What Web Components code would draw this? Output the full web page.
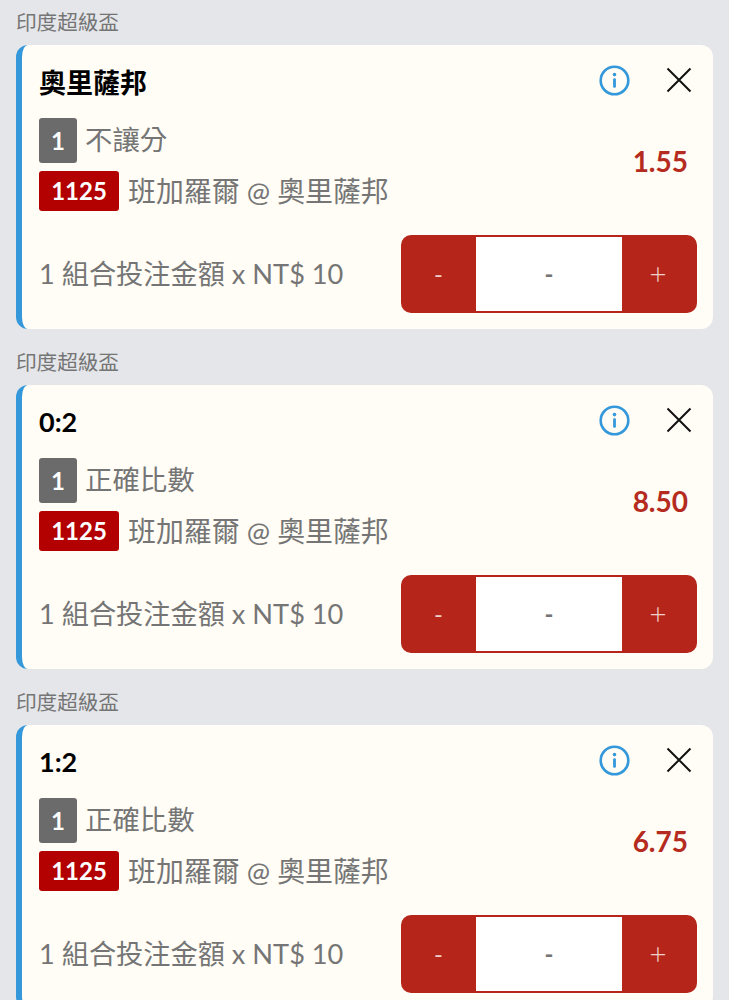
<!DOCTYPE html>
<html lang="zh-Hant">
<head>
<meta charset="utf-8">
<title>投注單</title>
<style>
  html, body {
    margin: 0;
    background: #e4e6e9;
    font-family: Lato, "Noto Sans CJK TC", sans-serif;
  }
  body {
    display: flex;
    flex-direction: column;
    gap: 11px;
    padding: 0 16px;
  }
</style>
</head>
<body>
<bet-card league="印度超級盃" pick="奧里薩邦" market="不讓分" odds="1.55"></bet-card>
<bet-card league="印度超級盃" pick="0:2" market="正確比數" odds="8.50"></bet-card>
<bet-card league="印度超級盃" pick="1:2" market="正確比數" odds="6.75"></bet-card>

<script>
class BetStepper extends HTMLElement {
  constructor() {
    super();
    this.attachShadow({ mode: 'open' });
  }

  connectedCallback() {
    this.shadowRoot.innerHTML = `
      <style>
        :host {
          display: grid;
          grid-template-columns: 75px 146px 75px;
          width: 296px;
          height: 78px;
          box-sizing: border-box;
          padding: 2px 0;
          border-radius: 10px;
          background: #b52519;
          font-size: 24px;
          overflow: hidden;
        }
        div {
          display: flex;
          align-items: center;
          justify-content: center;
          padding-bottom: 2px;
          color: #f0cfcb;
        }
        .value {
          background: #fff;
          color: #757575;
          font-weight: 700;
        }
        .plus {
          font-size: 30px;
          font-weight: 300;
          padding-right: 3px;
        }
      </style>
      <div>-</div>
      <div class="value">-</div>
      <div class="plus">+</div>
    `;
  }
}

class BetCard extends HTMLElement {
  constructor() {
    super();
    this.attachShadow({ mode: 'open' });
  }

  connectedCallback() {
    const league = this.getAttribute('league');
    const pick = this.getAttribute('pick');
    const market = this.getAttribute('market');
    const odds = this.getAttribute('odds');
    this.shadowRoot.innerHTML = `
      <style>
        :host {
          display: block;
          color: #757575;
        }
        .league {
          height: 45px;
          box-sizing: border-box;
          padding-top: 7px;
          font-size: 20.6px;
          line-height: 30px;
        }
        .card {
          display: flex;
          flex-direction: column;
          height: 284px;
          box-sizing: border-box;
          padding: 16px 16px 16px 17px;
          border-left: 6px solid #3498db;
          border-radius: 12px;
          background: #fffdf5;
        }
        .head {
          display: flex;
          align-items: center;
          height: 38px;
        }
        .pick {
          flex: 1;
          padding-top: 2px;
          font-size: 27px;
          font-weight: 700;
          color: #000;
        }
        .info { margin-right: 36px; }
        .close { margin-right: 5px; }
        svg { display: block; }
        .mid {
          display: flex;
          align-items: center;
          justify-content: space-between;
          margin-top: 19px;
        }
        .lines {
          display: flex;
          flex-direction: column;
          gap: 8px;
        }
        .line {
          display: flex;
          align-items: center;
          gap: 9px;
          font-size: 27.9px;
          line-height: 40px;
        }
        .line.market {
          gap: 8px;
          font-size: 27.4px;
        }
        .line.market .text { padding-bottom: 2px; }
        .no, .code {
          display: flex;
          align-items: center;
          justify-content: center;
          border-radius: 3px;
          color: #fff;
          font-weight: 700;
          font-size: 24px;
        }
        .no {
          width: 38px;
          height: 45px;
          background: #6b6b6b;
        }
        .code {
          width: 80px;
          height: 40px;
          background: #b30000;
        }
        .odds {
          margin: 0 9px 8px 0;
          font-size: 28px;
          font-weight: 700;
          color: #b52b20;
        }
        .foot {
          display: flex;
          align-items: center;
          justify-content: space-between;
          margin-top: auto;
          font-size: 27.2px;
        }
        .foot span { padding-bottom: 4px; }
      </style>
      <div class="league">${league}</div>
      <div class="card">
        <div class="head">
          <div class="pick">${pick}</div>
          <svg class="info" width="31" height="31" viewBox="0 0 31 31" fill="none">
            <circle cx="15.5" cy="15.5" r="13.8" stroke="#3498db" stroke-width="2.6"/>
            <circle cx="15.5" cy="9.6" r="1.8" fill="#3498db"/>
            <rect x="14.1" y="13.2" width="2.8" height="9.6" rx="1.2" fill="#3498db"/>
          </svg>
          <svg class="close" width="26" height="26" viewBox="0 0 26 26" fill="none" stroke="#111" stroke-width="2">
            <path d="M1.5 1.5 24.5 24.5M24.5 1.5 1.5 24.5"/>
          </svg>
        </div>
        <div class="mid">
          <div class="lines">
            <div class="line market"><span class="no">1</span><span class="text">${market}</span></div>
            <div class="line"><span class="code">1125</span>班加羅爾 @ 奧里薩邦</div>
          </div>
          <div class="odds">${odds}</div>
        </div>
        <div class="foot">
          <span>1 組合投注金額 x NT$ 10</span>
          <bet-stepper></bet-stepper>
        </div>
      </div>
    `;
  }
}

customElements.define('bet-stepper', BetStepper);
customElements.define('bet-card', BetCard);
</script>
</body>
</html>
